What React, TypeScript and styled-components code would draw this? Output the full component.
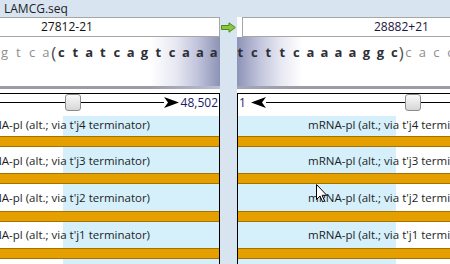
import React from "react";
import styled, { createGlobalStyle } from "styled-components";

type Side = "left" | "right";

const GlobalStyle = createGlobalStyle`
  html, body {
    margin: 0;
    padding: 0;
  }
  body {
    width: 450px;
    height: 264px;
    overflow: hidden;
    background: #d8e4f0;
    font-family: "Open Sans", "Noto Sans", sans-serif;
    font-size: 12px;
    color: #1e1e1e;
  }
`;

const Window = styled.div`
  position: relative;
  width: 450px;
  height: 264px;
  overflow: hidden;
  display: flex;
  flex-direction: column;
`;

const Title = styled.div`
  height: 17px;
  line-height: 17px;
  padding-left: 4px;
  flex-shrink: 0;
`;

const Panes = styled.div`
  display: flex;
  flex: 1;
  min-height: 0;
`;

const Pane = styled.div<{ side: Side }>`
  width: ${(p) => (p.side === "left" ? 220 : 213)}px;
  flex-shrink: 0;
  display: flex;
  flex-direction: column;
  overflow: hidden;
`;

const Gutter = styled.div`
  width: 17px;
  flex-shrink: 0;
  display: flex;
  justify-content: center;
  padding-top: 5px;
`;

const PosRow = styled.div<{ side: Side }>`
  height: 20px;
  flex-shrink: 0;
  display: flex;
  background: ${(p) => (p.side === "right" ? "#fff" : "transparent")};
  padding-left: ${(p) => (p.side === "right" ? 5 : 0)}px;
`;

const PosBox = styled.div<{ side: Side; indent: number }>`
  flex: 1;
  background: #fff;
  border: 1px solid #a6a6a6;
  ${(p) => (p.side === "left" ? "border-left: none;" : "border-right: none;")}
  padding-left: ${(p) => p.indent}px;
  line-height: 18px;
  color: ${(p) => (p.side === "left" ? "#111" : "#1c1540")};
  white-space: nowrap;
`;

const SeqArea = styled.div<{ side: Side }>`
  height: 49px;
  flex-shrink: 0;
  box-sizing: border-box;
  padding-top: 8px;
  background: ${(p) =>
    p.side === "left"
      ? "linear-gradient(to right, #fff 150px, #e7e8f2 176px, #c2c5dc 197px, #8d93b6 220px)"
      : "linear-gradient(to right, #8d93b6 0, #c2c5dc 23px, #e7e8f2 44px, #fff 65px)"};
`;

const Bases = styled.div<{ offset: number }>`
  display: flex;
  margin-left: ${(p) => p.offset}px;
  height: 14px;
`;

const Base = styled.span<{ strong: boolean; cell: number }>`
  width: ${(p) => p.cell}px;
  flex-shrink: 0;
  text-align: center;
  line-height: 14px;
  font-size: 13px;
  font-weight: ${(p) => (p.strong ? 700 : 400)};
  color: ${(p) => (p.strong ? "#2e2e36" : "#8e8e8e")};
`;

const Bracket = styled.span<{ room: number }>`
  width: ${(p) => p.room}px;
  flex-shrink: 0;
  display: flex;
  justify-content: center;
  line-height: 14px;
  font-size: 17px;
  color: #505050;
  margin-top: 1px;
`;

const Strip = styled.div<{ side: Side }>`
  height: 3px;
  flex-shrink: 0;
  background: ${(p) =>
    p.side === "left"
      ? "linear-gradient(to right, #9c9ca6 150px, #b9bfd6 220px)"
      : "linear-gradient(to right, #a3a6ba 0, #9c9ca6 60px)"};
`;

const Spacer = styled.div`
  height: 4px;
  flex-shrink: 0;
  background: #fff;
`;

const Tracks = styled.div<{ side: Side }>`
  flex: 1;
  background: #fff;
  border-top: 1px solid #000;
  ${(p) => (p.side === "left" ? "border-right: 1px solid #000;" : "border-left: 1px solid #000;")}
  display: flex;
  flex-direction: column;
`;

const Ruler = styled.div`
  height: 22px;
  flex-shrink: 0;
  box-sizing: border-box;
  padding-bottom: 5px;
  display: flex;
  align-items: center;
`;

const RulerLine = styled.div`
  flex: 1;
  height: 1px;
  background: #000;
  position: relative;
`;

const Thumb = styled.div<{ at: number }>`
  position: absolute;
  left: ${(p) => p.at}px;
  top: -8px;
  width: 14px;
  height: 15px;
  border: 1px solid #8c8c8c;
  border-radius: 3px;
  background: linear-gradient(#fafafa, #d6d6d6);
`;

const RulerLabel = styled.span<{ side: Side }>`
  color: #1a1a6a;
  line-height: 14px;
  padding: ${(p) => (p.side === "left" ? "0 1px 0 2px" : "0 0 0 1px")};
`;

const ArrowHead = styled.svg<{ gap: number }>`
  flex-shrink: 0;
  margin-left: ${(p) => p.gap}px;
`;

const Row = styled.div<{ side: Side; short?: boolean }>`
  height: ${(p) => (p.short ? 20 : 26.3)}px;
  flex-shrink: 0;
  box-sizing: border-box;
  padding-bottom: ${(p) => (p.short ? 4 : 0)}px;
  display: flex;
  align-items: center;
  justify-content: ${(p) => (p.side === "left" ? "flex-end" : "flex-start")};
  padding-right: ${(p) => (p.side === "left" ? 69 : 0)}px;
  padding-left: ${(p) => (p.side === "right" ? 70 : 0)}px;
  font-size: 11.5px;
  white-space: nowrap;
  overflow: hidden;
  background: ${(p) =>
    p.side === "left"
      ? "linear-gradient(to right, #fff 63px, #d5f0fb 63px)"
      : "linear-gradient(to right, #d5f0fb 158px, #fff 158px)"};
`;

const Bar = styled.div`
  height: 11px;
  flex-shrink: 0;
  box-sizing: border-box;
  background: #e5a000;
  border-top: 1px solid #a37400;
  border-bottom: 1px solid #a37400;
`;

const Cursor = styled.svg`
  position: absolute;
  left: 316px;
  top: 184px;
`;

const leftBases = "gtca".split("");
const leftCore = "ctatcagtcaaa".split("");
const rightCore = "tcttcaaaaggc".split("");
const rightBases = "cacc".split("");

const labels = ["t'j4", "t'j3", "t'j2", "t'j1"];

const Pointer = ({ dir, gap }: { dir: Side; gap: number }) => (
  <ArrowHead gap={gap} width="15" height="11" viewBox="0 0 15 11">
    <polygon
      points={dir === "right" ? "0,0 15,5.5 0,11 4,5.5" : "15,0 0,5.5 15,11 11,5.5"}
      fill="#000"
    />
  </ArrowHead>
);

const TrackRows = ({ side }: { side: Side }) => (
  <>
    {labels.map((l, i) => (
      <React.Fragment key={l}>
        <Row side={side} short={i === 0}>
          mRNA-pl (alt.; via {l} terminator)
        </Row>
        <Bar />
      </React.Fragment>
    ))}
    <Row side={side} />
  </>
);

const App: React.FC = () => (
  <Window>
    <GlobalStyle />
    <Title>LAMCG.seq</Title>
    <Panes>
      <Pane side="left">
        <PosRow side="left">
          <PosBox side="left" indent={41}>27812-21</PosBox>
        </PosRow>
        <SeqArea side="left">
          <Bases offset={-2.5}>
            {leftBases.map((b, i) => (
              <Base key={"g" + i} strong={false} cell={13.85}>{b}</Base>
            ))}
            <Bracket room={1.6}>(</Bracket>
            {leftCore.map((b, i) => (
              <Base key={"c" + i} strong cell={13.85}>{b}</Base>
            ))}
          </Bases>
        </SeqArea>
        <Strip side="left" />
        <Spacer />
        <Tracks side="left">
          <Ruler>
            <RulerLine>
              <Thumb at={65} />
            </RulerLine>
            <Pointer dir="right" gap={0} />
            <RulerLabel side="left">48,502</RulerLabel>
          </Ruler>
          <TrackRows side="left" />
        </Tracks>
      </Pane>

      <Gutter>
        <svg width="15" height="11" viewBox="0 0 15 11">
          <path
            d="M0.5 3.5 H8 V0.8 L14.3 5.5 L8 10.2 V7.5 H0.5 Z"
            fill="#8cc63e"
            stroke="#4e8a1c"
            strokeWidth="1"
            strokeLinejoin="round"
          />
        </svg>
      </Gutter>

      <Pane side="right">
        <PosRow side="right">
          <PosBox side="right" indent={131}>28882+21</PosBox>
        </PosRow>
        <SeqArea side="right">
          <Bases offset={-3.7}>
            {rightCore.map((b, i) => (
              <Base key={"c" + i} strong cell={14}>{b}</Base>
            ))}
            <Bracket room={0}>)</Bracket>
            {rightBases.map((b, i) => (
              <Base key={"g" + i} strong={false} cell={14}>{b}</Base>
            ))}
          </Bases>
        </SeqArea>
        <Strip side="right" />
        <Spacer />
        <Tracks side="right">
          <Ruler>
            <RulerLabel side="right">1</RulerLabel>
            <Pointer dir="left" gap={5} />
            <RulerLine>
              <Thumb at={139} />
            </RulerLine>
          </Ruler>
          <TrackRows side="right" />
        </Tracks>
      </Pane>
    </Panes>

    <Cursor width="12" height="19" viewBox="0 0 12 19">
      <path
        d="M0.5 0.5 V15.5 L4 12 L6.6 17.8 L8.6 16.9 L6.1 11.3 H10.8 Z"
        fill="#fff"
        stroke="#000"
        strokeWidth="1"
        strokeLinejoin="round"
      />
    </Cursor>
  </Window>
);

export default App;
